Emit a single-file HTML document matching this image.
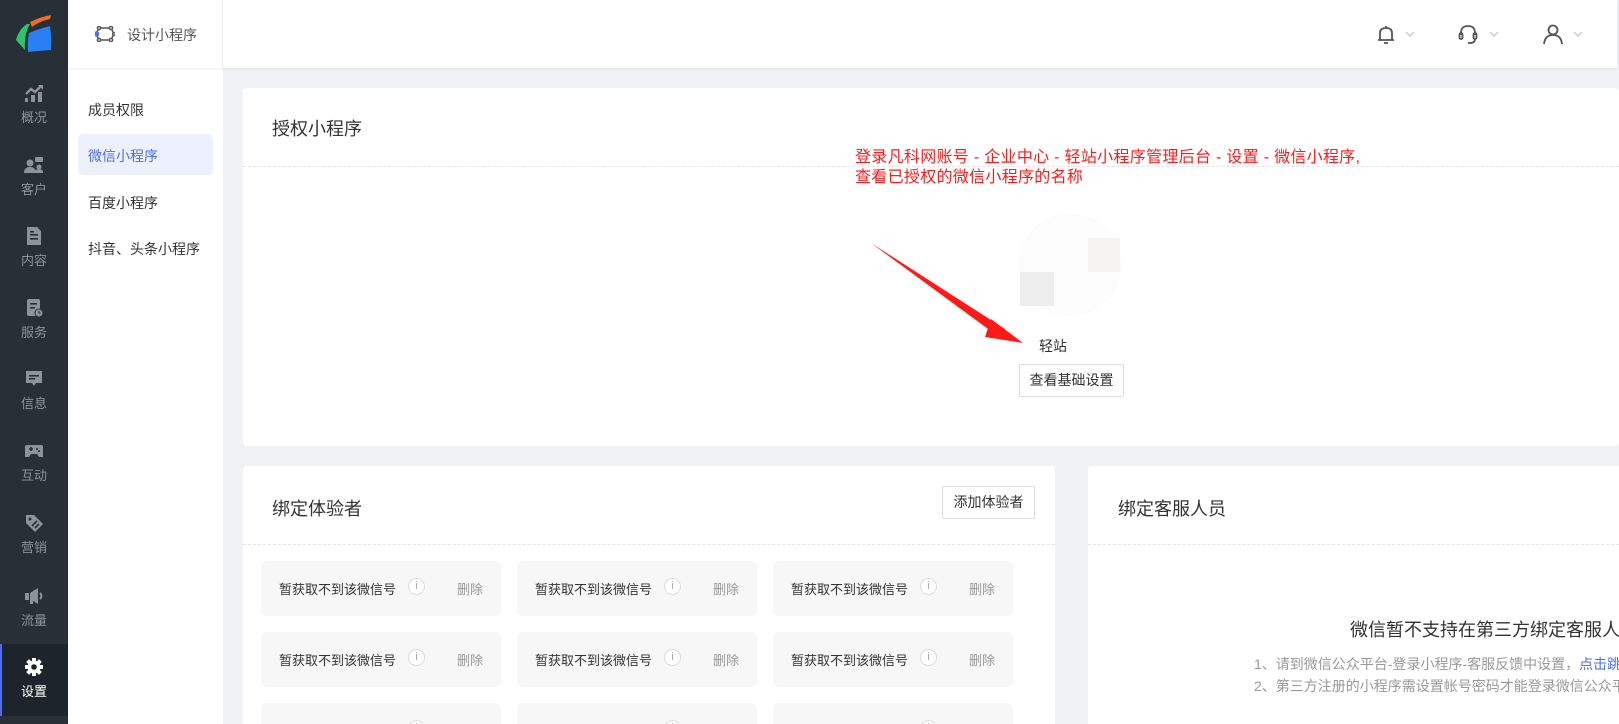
<!DOCTYPE html>
<html><head><meta charset="utf-8">
<style>
*{margin:0;padding:0;box-sizing:border-box}
html,body{width:1619px;height:724px;overflow:hidden}
body{background:#f0f2f5;font-family:"Liberation Sans","Noto Sans CJK SC",sans-serif;color:#333;position:relative}
.abs{position:absolute}
.side{left:0;top:0;width:68px;height:724px;background:#272f37}
.si{position:absolute;left:0;width:68px;text-align:center;color:#8b939c;font-size:13px}
.si svg{display:block;margin:0 auto}
.nav2{left:68px;top:0;width:155px;height:724px;background:#fff}
.hdr{left:68px;top:0;width:1549px;height:68px;background:#fff;box-shadow:0 1px 3px rgba(0,0,0,.08)}
.card{background:#fff;border-radius:4px;overflow:hidden}
.dash{position:absolute;left:0;right:0;border-top:1px dashed #e3e5e8}
.item{position:absolute;width:240px;height:55px;background:#f7f7f7;border-radius:6px;font-size:13px;color:#333}
.item .t{position:absolute;left:18px;top:18px}
.item .i{position:absolute;left:147px;top:17px;width:17px;height:17px;border:1px solid #ddd;border-radius:50%;background:#fff;color:#aaa;font-size:11px;text-align:center;line-height:15px}
.item .d{position:absolute;left:196px;top:18px;color:#999}
</style></head><body>
<div class="abs side">
<svg class="abs" style="left:0;top:0" width="68" height="68" viewBox="0 0 68 68">
<path d="M16 40 Q19 29 27 24 L30 24 Q24 34 25 50 Z" fill="#2ec26b"/>
<path d="M30 22 Q40 17 51 15 L50 19 Q40 21 32 27 Z" fill="#f26d21"/>
<path d="M29 33 Q38 29 50 26 Q52 38 51 50 L28 52 Q27 42 29 33 Z" fill="#2a7ff5"/>
</svg>
<div class="si" style="top:83px"><svg width="20" height="20" viewBox="0 0 20 20" fill="#8b939c"><path d="M2 11l5-5 4 3 6-6" stroke="#8b939c" stroke-width="2.5" fill="none"/><path d="M14 2h5v5z"/><rect x="1" y="15" width="3" height="4"/><rect x="7" y="12" width="4" height="7"/><rect x="14" y="9" width="4" height="10"/></svg><div style="margin-top:4px">概况</div></div>
<div class="si" style="top:155px"><svg width="20" height="20" viewBox="0 0 20 20" fill="#8b939c"><circle cx="6" cy="8" r="3.5"/><path d="M0 18q0-6 6-6t6 6z"/><rect x="11" y="2" width="8" height="5" rx="1"/><circle cx="15" cy="12" r="2.5"/><path d="M11 18q0-4 4-4t4 4z"/></svg><div style="margin-top:4px">客户</div></div>
<div class="si" style="top:226px"><svg width="20" height="20" viewBox="0 0 20 20" fill="#8b939c"><path d="M3 1h10l4 4v14H3z"/><rect x="6" y="8" width="8" height="1.6" fill="#272f37"/><rect x="6" y="12" width="8" height="1.6" fill="#272f37"/><rect x="6" y="5" width="4" height="1.6" fill="#272f37"/></svg><div style="margin-top:4px">内容</div></div>
<div class="si" style="top:298px"><svg width="20" height="20" viewBox="0 0 20 20" fill="#8b939c"><rect x="3" y="1" width="13" height="17" rx="2"/><rect x="6" y="5" width="7" height="1.6" fill="#272f37"/><rect x="6" y="9" width="5" height="1.6" fill="#272f37"/><circle cx="15" cy="15" r="4.5" fill="#272f37"/><circle cx="15" cy="15" r="3.5"/><path d="M15 13v2h1.5" stroke="#272f37" fill="none"/></svg><div style="margin-top:4px">服务</div></div>
<div class="si" style="top:369px"><svg width="20" height="20" viewBox="0 0 20 20" fill="#8b939c"><path d="M2 2h16v12h-6l-2 3-2-3H2z"/><rect x="5" y="6" width="10" height="1.6" fill="#272f37"/><rect x="5" y="9" width="6" height="1.6" fill="#272f37"/></svg><div style="margin-top:4px">信息</div></div>
<div class="si" style="top:441px"><svg width="20" height="20" viewBox="0 0 20 20" fill="#8b939c"><path d="M3 4h14q2 0 2 2v10h-4l-2-3H7l-2 3H1V6q0-2 2-2z"/><path d="M5 8h4M7 6v4" stroke="#272f37" stroke-width="1.6"/><circle cx="13" cy="8" r="1" fill="#272f37"/><circle cx="15" cy="10" r="1" fill="#272f37"/></svg><div style="margin-top:4px">互动</div></div>
<div class="si" style="top:513px"><svg width="20" height="20" viewBox="0 0 20 20" fill="#8b939c"><path d="M2 2h8l9 9-8 8-9-9z"/><circle cx="6" cy="6" r="1.5" fill="#272f37"/><path d="M8 13l5-5M11 15l4-4" stroke="#272f37" stroke-width="1.6"/></svg><div style="margin-top:4px">营销</div></div>
<div class="si" style="top:586px"><svg width="20" height="20" viewBox="0 0 20 20" fill="#8b939c"><rect x="1" y="7" width="4" height="7"/><path d="M6 7l8-5v16l-8-5z"/><rect x="6" y="13" width="3" height="5"/><path d="M16 7q3 3 0 6" stroke="#8b939c" stroke-width="2" fill="none"/></svg><div style="margin-top:4px">流量</div></div>
<div class="abs" style="left:0;top:644px;width:68px;height:72px;background:#1d242b;border-left:2px solid #4a6cf7"></div>
<div class="si" style="top:657px;color:#fff"><svg width="20" height="20" viewBox="0 0 20 20"><g fill="#fff"><circle cx="10" cy="10" r="6.5"/><g stroke="#fff" stroke-width="4"><path d="M10 1v18M1 10h18M3.6 3.6l12.8 12.8M16.4 3.6L3.6 16.4"/></g></g><circle cx="10" cy="10" r="2.8" fill="#1d242b"/></svg><div style="margin-top:4px">设置</div></div>
</div>

<div class="abs nav2">
<div class="abs" style="left:20px;top:100px;font-size:14px">成员权限</div>
<div class="abs" style="left:10px;top:134px;width:135px;height:41px;background:#edf1fd;border-radius:5px"></div>
<div class="abs" style="left:20px;top:146px;font-size:14px;color:#4a6cf7">微信小程序</div>
<div class="abs" style="left:20px;top:193px;font-size:14px">百度小程序</div>
<div class="abs" style="left:20px;top:239px;font-size:14px">抖音、头条小程序</div>
</div>
<div class="abs hdr">
<svg class="abs" style="left:27px;top:26px" width="20" height="16" viewBox="0 0 20 16" fill="none" stroke="#555" stroke-width="1.5"><path d="M4 2h12l3 6-3 6H4L1 8z" stroke-linejoin="round"/><circle cx="4" cy="2" r="1.6" fill="#fff"/><circle cx="16" cy="2" r="1.6" fill="#fff"/><circle cx="16" cy="14" r="1.6" fill="#fff"/><circle cx="4" cy="14" r="1.6" fill="#fff"/><circle cx="19" cy="8" r="1.4" fill="#fff"/><circle cx="1.5" cy="8" r="2" fill="#4a6cf7" stroke="#4a6cf7"/></svg>
<div class="abs" style="left:59px;top:25px;font-size:14px;color:#555">设计小程序</div>
<div class="abs" style="left:154px;top:0;width:1px;height:68px;background:#eee"></div>
<svg class="abs" style="left:1307px;top:23px" width="22" height="22" viewBox="0 0 22 22" fill="none" stroke="#555" stroke-width="1.8"><path d="M5 17V10q0-5 6-5t6 5v7zM3 17h16M9 20h4M11 5V3"/></svg>
<svg class="abs" style="left:1389px;top:23px" width="22" height="22" viewBox="0 0 22 22" fill="none" stroke="#555" stroke-width="1.8"><path d="M4 12V10q0-7 7-7t7 7v2"/><rect x="2.5" y="10" width="3" height="6" rx="1.5"/><rect x="16.5" y="10" width="3" height="6" rx="1.5"/><path d="M18 16q0 4-5 4h-2"/></svg>
<svg class="abs" style="left:1474px;top:23px" width="22" height="22" viewBox="0 0 22 22" fill="none" stroke="#555" stroke-width="1.8"><circle cx="11" cy="7" r="4.5"/><path d="M2 21q1-9 9-9t9 9"/></svg>
<svg class="abs" style="left:1337px;top:31px" width="10" height="6" viewBox="0 0 10 6" fill="none" stroke="#bbb"><path d="M1 1l4 4 4-4"/></svg>
<svg class="abs" style="left:1421px;top:31px" width="10" height="6" viewBox="0 0 10 6" fill="none" stroke="#bbb"><path d="M1 1l4 4 4-4"/></svg>
<svg class="abs" style="left:1505px;top:31px" width="10" height="6" viewBox="0 0 10 6" fill="none" stroke="#bbb"><path d="M1 1l4 4 4-4"/></svg>
</div>

<div class="abs card" style="left:243px;top:88px;width:1376px;height:358px">
<div class="abs" style="left:29px;top:27px;font-size:18px;color:#333">授权小程序</div>
<div class="dash" style="top:78px"></div>
<div class="abs" style="left:612px;top:60px;font-size:16px;line-height:20px;letter-spacing:0.3px;color:#ff1a1a">登录凡科网账号 - 企业中心 - 轻站小程序管理后台 - 设置 - 微信小程序,<br>查看已授权的微信小程序的名称</div>
<div class="abs" style="left:777px;top:127px;width:100px;height:100px;border-radius:50%;background:#fdfdfd;box-shadow:0 0 2px #f2f2f2"></div>
<div class="abs" style="left:845px;top:150px;width:32px;height:34px;background:#f4f3f2"></div>
<div class="abs" style="left:777px;top:184px;width:34px;height:34px;background:#ededee"></div>
<div class="abs" style="left:796px;top:248px;font-size:14px">轻站</div>
<div class="abs" style="left:776px;top:276px;width:105px;height:33px;border:1px solid #ddd;border-radius:2px;font-size:14px;text-align:center;line-height:31px">查看基础设置</div>
<svg class="abs" style="left:620px;top:145px" width="170" height="120" viewBox="0 0 170 120"><path d="M8 10 L142 96 L136 104 Z" fill="#ff1a1a"/><path d="M128 86 L160 110 L122 104 Z" fill="#ff1a1a"/></svg>
</div>

<div class="abs card" style="left:243px;top:466px;width:812px;height:258px;border-radius:4px 4px 0 0">
<div class="abs" style="left:29px;top:29px;font-size:18px">绑定体验者</div>
<div class="abs" style="left:699px;top:20px;width:93px;height:33px;border:1px solid #ddd;border-radius:2px;font-size:14px;text-align:center;line-height:31px">添加体验者</div>
<div class="dash" style="top:78px"></div>
<div class="item" style="left:18px;top:95px"><span class="t">暂获取不到该微信号</span><span class="i">i</span><span class="d">删除</span></div>
<div class="item" style="left:274px;top:95px"><span class="t">暂获取不到该微信号</span><span class="i">i</span><span class="d">删除</span></div>
<div class="item" style="left:530px;top:95px"><span class="t">暂获取不到该微信号</span><span class="i">i</span><span class="d">删除</span></div>
<div class="item" style="left:18px;top:166px"><span class="t">暂获取不到该微信号</span><span class="i">i</span><span class="d">删除</span></div>
<div class="item" style="left:274px;top:166px"><span class="t">暂获取不到该微信号</span><span class="i">i</span><span class="d">删除</span></div>
<div class="item" style="left:530px;top:166px"><span class="t">暂获取不到该微信号</span><span class="i">i</span><span class="d">删除</span></div>
<div class="item" style="left:18px;top:237px"><span class="i">i</span></div>
<div class="item" style="left:274px;top:237px"><span class="i">i</span></div>
<div class="item" style="left:530px;top:237px"><span class="i">i</span></div>
</div>

<div class="abs card" style="left:1088px;top:466px;width:531px;height:258px;border-radius:4px 0 0 0">
<div class="abs" style="left:30px;top:29px;font-size:18px">绑定客服人员</div>
<div class="dash" style="top:78px"></div>
<div class="abs" style="left:262px;top:150px;font-size:18px;white-space:nowrap;color:#333">微信暂不支持在第三方绑定客服人员</div>
<div class="abs" style="left:166px;top:187px;font-size:14px;line-height:22px;color:#999;white-space:nowrap">1、请到微信公众平台-登录小程序-客服反馈中设置，<span style="color:#4a6cf7">点击跳转</span><br>2、第三方注册的小程序需设置帐号密码才能登录微信公众平台</div>
</div>
</body></html>
